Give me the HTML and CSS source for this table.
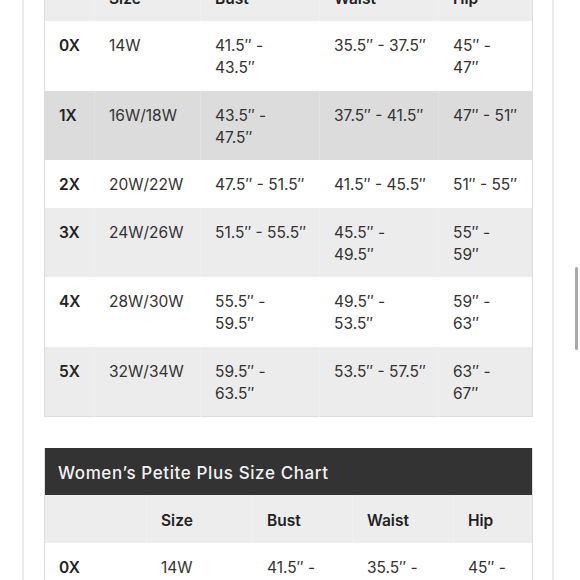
FILE: index.html
```html
<!DOCTYPE html>
<html lang="en">
<head>
<meta charset="utf-8">
<title>Women's Plus Size Chart</title>
<link rel="stylesheet" href="styles.css">
</head>
<body>
<div class="page">
  <table class="chart chart-plus">
    <colgroup>
      <col class="c1"><col class="c2"><col class="c3"><col class="c4"><col class="c5">
    </colgroup>
    <thead>
      <tr class="head"><th></th><th>Size</th><th>Bust</th><th>Waist</th><th>Hip</th></tr>
    </thead>
    <tbody>
      <tr><td class="sz">0X</td><td>14W</td><td>41.5″ -<br>43.5″</td><td>35.5″ - 37.5″</td><td>45″ -<br>47″</td></tr>
      <tr class="hover"><td class="sz">1X</td><td>16W/18W</td><td>43.5″ -<br>47.5″</td><td>37.5″ - 41.5″</td><td>47″ - 51″</td></tr>
      <tr><td class="sz">2X</td><td>20W/22W</td><td>47.5″ - 51.5″</td><td>41.5″ - 45.5″</td><td>51″ - 55″</td></tr>
      <tr class="alt"><td class="sz">3X</td><td>24W/26W</td><td>51.5″ - 55.5″</td><td>45.5″ -<br>49.5″</td><td>55″ -<br>59″</td></tr>
      <tr><td class="sz">4X</td><td>28W/30W</td><td>55.5″ -<br>59.5″</td><td>49.5″ -<br>53.5″</td><td>59″ -<br>63″</td></tr>
      <tr class="alt"><td class="sz">5X</td><td>32W/34W</td><td>59.5″ -<br>63.5″</td><td>53.5″ - 57.5″</td><td>63″ -<br>67″</td></tr>
    </tbody>
  </table>

  <table class="chart chart-petite">
    <colgroup>
      <col class="p1"><col class="p2"><col class="p3"><col class="p4"><col class="p5">
    </colgroup>
    <thead>
      <tr class="title"><th colspan="5">Women’s Petite Plus Size Chart</th></tr>
      <tr class="head"><th></th><th>Size</th><th>Bust</th><th>Waist</th><th>Hip</th></tr>
    </thead>
    <tbody>
      <tr><td class="sz">0X</td><td>14W</td><td>41.5″ -<br>43.5″</td><td>35.5″ -<br>37.5″</td><td>45″ -<br>47″</td></tr>
    </tbody>
  </table>
</div>
<div class="scroll-indicator"></div>
</body>
</html>
```
FILE: styles.css
```css
html, body {
  margin: 0;
  padding: 0;
  background: #ffffff;
  overflow: hidden;
}

body {
  font-family: Inter, "Liberation Sans", sans-serif;
  color: #333333;
}

.page {
  margin: 0 26px 0 22px;
  padding: 0 20px 40px;
  border-left: 2px solid #e9e9e9;
  border-right: 2px solid #e9e9e9;
  min-height: 700px;
}

.chart {
  width: 488px;
  border-collapse: collapse;
  table-layout: fixed;
  font-size: 15.5px;
  line-height: 22px;
  border: 1px solid #dddddd;
  border-top: none;
}

.chart-plus {
  margin-top: -27px;
}

.chart-petite {
  margin-top: 31px;
}

.c1 { width: 50px; }
.c2 { width: 106px; }
.c3 { width: 119px; }
.c4 { width: 119px; }
.c5 { width: 94px; }

.p1 { width: 102px; }
.p2 { width: 106px; }
.p3 { width: 100px; }
.p4 { width: 101px; }
.p5 { width: 79px; }

.chart th,
.chart td {
  padding: 14px 4px 11.5px 14px;
  text-align: left;
  vertical-align: top;
  white-space: nowrap;
  border-right: 1px solid rgba(255, 255, 255, 0.18);
}

.chart th:last-child,
.chart td:last-child {
  border-right: none;
}

.head th {
  background: #ededed;
  font-weight: 600;
  color: #222222;
  padding-top: 15px;
  padding-bottom: 11px;
}

.title th {
  background: #333333;
  color: #f2f2f2;
  font-weight: 500;
  font-size: 17px;
  letter-spacing: 0.6px;
  padding: 14px 13px 11px;
}

.sz {
  font-weight: 600;
  color: #222222;
}

.hover td {
  background: #dcdcdc;
}

.alt td {
  background: #ececec;
}

.scroll-indicator {
  position: fixed;
  right: 2px;
  top: 267px;
  width: 3px;
  height: 83px;
  border-radius: 2px;
  background: #a9a9a9;
}
```
